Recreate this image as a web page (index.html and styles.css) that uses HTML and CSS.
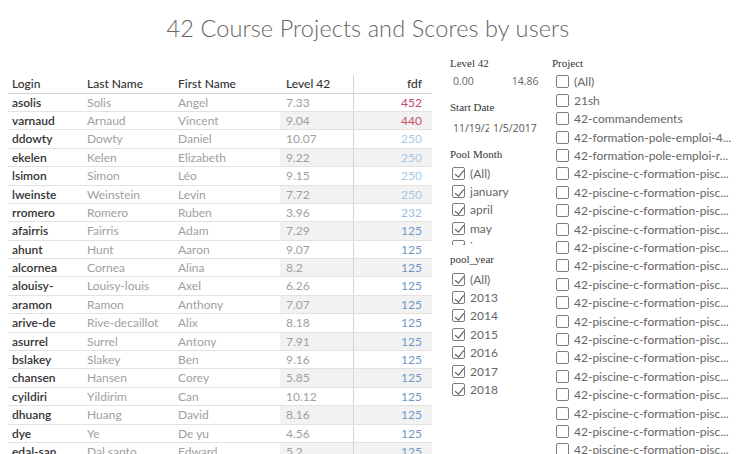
FILE: index.html
```html
<!DOCTYPE html>
<html lang="en">
<head>
<meta charset="utf-8">
<title>42 Course Projects and Scores by users</title>
<link rel="stylesheet" href="styles.css">
</head>
<body>
<header class="title">42 Course Projects and Scores by users</header>
<main class="dash">
  <section class="table">
    <div class="row head"><div>Login</div><div>Last Name</div><div>First Name</div><div class="lvl">Level 42</div><div class="fdf">fdf</div></div>
    <div class="row"><div class="login">asolis</div><div>Solis</div><div>Angel</div><div class="lvl">7.33</div><div class="fdf red">452</div></div>
    <div class="row"><div class="login">varnaud</div><div>Arnaud</div><div>Vincent</div><div class="lvl">9.04</div><div class="fdf red2">440</div></div>
    <div class="row"><div class="login">ddowty</div><div>Dowty</div><div>Daniel</div><div class="lvl">10.07</div><div class="fdf lb">250</div></div>
    <div class="row"><div class="login">ekelen</div><div>Kelen</div><div>Elizabeth</div><div class="lvl">9.22</div><div class="fdf lb">250</div></div>
    <div class="row"><div class="login">lsimon</div><div>Simon</div><div>Léo</div><div class="lvl">9.15</div><div class="fdf lb">250</div></div>
    <div class="row"><div class="login">lweinste</div><div>Weinstein</div><div>Levin</div><div class="lvl">7.72</div><div class="fdf lb">250</div></div>
    <div class="row"><div class="login">rromero</div><div>Romero</div><div>Ruben</div><div class="lvl">3.96</div><div class="fdf mb">232</div></div>
    <div class="row"><div class="login">afairris</div><div>Fairris</div><div>Adam</div><div class="lvl">7.29</div><div class="fdf b">125</div></div>
    <div class="row"><div class="login">ahunt</div><div>Hunt</div><div>Aaron</div><div class="lvl">9.07</div><div class="fdf b">125</div></div>
    <div class="row"><div class="login">alcornea</div><div>Cornea</div><div>Alina</div><div class="lvl">8.2</div><div class="fdf b">125</div></div>
    <div class="row"><div class="login">alouisy-</div><div>Louisy-louis</div><div>Axel</div><div class="lvl">6.26</div><div class="fdf b">125</div></div>
    <div class="row"><div class="login">aramon</div><div>Ramon</div><div>Anthony</div><div class="lvl">7.07</div><div class="fdf b">125</div></div>
    <div class="row"><div class="login">arive-de</div><div>Rive-decaillot</div><div>Alix</div><div class="lvl">8.18</div><div class="fdf b">125</div></div>
    <div class="row"><div class="login">asurrel</div><div>Surrel</div><div>Antony</div><div class="lvl">7.91</div><div class="fdf b">125</div></div>
    <div class="row"><div class="login">bslakey</div><div>Slakey</div><div>Ben</div><div class="lvl">9.16</div><div class="fdf b">125</div></div>
    <div class="row"><div class="login">chansen</div><div>Hansen</div><div>Corey</div><div class="lvl">5.85</div><div class="fdf b">125</div></div>
    <div class="row"><div class="login">cyildiri</div><div>Yildirim</div><div>Can</div><div class="lvl">10.12</div><div class="fdf b">125</div></div>
    <div class="row"><div class="login">dhuang</div><div>Huang</div><div>David</div><div class="lvl">8.16</div><div class="fdf b">125</div></div>
    <div class="row"><div class="login">dye</div><div>Ye</div><div>De yu</div><div class="lvl">4.56</div><div class="fdf b">125</div></div>
    <div class="row"><div class="login">edal-san</div><div>Dal santo</div><div>Edward</div><div class="lvl">5.2</div><div class="fdf b">125</div></div>
  </section>

  <aside class="filters col1">
    <div class="ftitle">Level 42</div>
    <div class="range"><span>0.00</span><span class="hi">14.86</span></div>
    <div class="ftitle gap">Start Date</div>
    <div class="dates"><span class="d1">11/19/2013</span><span class="d2">1/5/2017</span></div>
    <div class="ftitle gap">Pool Month</div>
    <ul class="list months">
      <li><span class="cb on"></span>(All)</li>
      <li><span class="cb on"></span>january</li>
      <li><span class="cb on"></span>april</li>
      <li><span class="cb on"></span>may</li>
      <li><span class="cb on"></span>june</li>
    </ul>
    <div class="ftitle gap2">pool_year</div>
    <ul class="list years">
      <li><span class="cb on"></span>(All)</li>
      <li><span class="cb on"></span>2013</li>
      <li><span class="cb on"></span>2014</li>
      <li><span class="cb on"></span>2015</li>
      <li><span class="cb on"></span>2016</li>
      <li><span class="cb on"></span>2017</li>
      <li><span class="cb on"></span>2018</li>
    </ul>
  </aside>

  <aside class="filters col2">
    <div class="ftitle">Project</div>
    <ul class="list projects">
      <li><span class="cb"></span>(All)</li>
      <li><span class="cb"></span>21sh</li>
      <li><span class="cb"></span>42-commandements</li>
      <li><span class="cb"></span>42-formation-pole-emploi-4...</li>
      <li><span class="cb"></span>42-formation-pole-emploi-r...</li>
      <li><span class="cb"></span>42-piscine-c-formation-pisc...</li>
      <li><span class="cb"></span>42-piscine-c-formation-pisc...</li>
      <li><span class="cb"></span>42-piscine-c-formation-pisc...</li>
      <li><span class="cb"></span>42-piscine-c-formation-pisc...</li>
      <li><span class="cb"></span>42-piscine-c-formation-pisc...</li>
      <li><span class="cb"></span>42-piscine-c-formation-pisc...</li>
      <li><span class="cb"></span>42-piscine-c-formation-pisc...</li>
      <li><span class="cb"></span>42-piscine-c-formation-pisc...</li>
      <li><span class="cb"></span>42-piscine-c-formation-pisc...</li>
      <li><span class="cb"></span>42-piscine-c-formation-pisc...</li>
      <li><span class="cb"></span>42-piscine-c-formation-pisc...</li>
      <li><span class="cb"></span>42-piscine-c-formation-pisc...</li>
      <li><span class="cb"></span>42-piscine-c-formation-pisc...</li>
      <li><span class="cb"></span>42-piscine-c-formation-pisc...</li>
      <li><span class="cb"></span>42-piscine-c-formation-pisc...</li>
      <li><span class="cb"></span>42-piscine-c-formation-pisc...</li>
    </ul>
  </aside>
</main>
</body>
</html>
```

FILE: styles.css
```css
* { box-sizing: border-box; }
html, body { margin: 0; padding: 0; }
body {
  width: 736px;
  height: 454px;
  overflow: hidden;
  background: #fff;
  font-family: Lato, "Open Sans", sans-serif;
  font-size: 12px;
  color: #333;
}
.title {
  height: 55px;
  line-height: 56px;
  text-align: center;
  font-size: 23.5px;
  font-weight: 300;
  color: #666;
  letter-spacing: 0.1px;
}
.dash {
  display: flex;
  align-items: flex-start;
}
.table {
  margin-top: 20.2px;
  margin-left: 8px;
  width: 424px;
}
.row {
  display: grid;
  grid-template-columns: 75px 91px 106px 73px 79px;
  height: 18.4px;
  border-bottom: 1px solid #e2e2e2;
  color: #a0a0a0;
}
.row > div {
  padding-left: 4px;
  line-height: 18px;
  white-space: nowrap;
  overflow: hidden;
}
.row > .lvl { padding-left: 6px; }
.row > .fdf {
  text-align: right;
  padding-left: 0;
  padding-right: 10px;
  border-left: 1px solid #d4d4d4;
}
.row:nth-child(odd):not(.head) > .lvl,
.row:nth-child(odd):not(.head) > .fdf { background: #f2f2f2; }
.head { color: #333; font-weight: 500; border-bottom-color: #d6d6d6; }
.login { color: #333; font-weight: 600; }
.red { color: #c5476b; }
.red2 { color: #c94e70; }
.lb { color: #a9c7e4; }
.mb { color: #9dbde0; }
.b { color: #6e97c8; }

.filters { display: flex; flex-direction: column; }
.col1 { margin-left: 16px; width: 98px; padding-left: 2px; overflow: hidden; }
.col2 { margin-left: 2px; width: 188px; padding-left: 4px; }
.ftitle {
  font-family: "Liberation Serif", serif;
  font-size: 11px;
  color: #333;
  height: 16px;
  line-height: 17px;
}
.ftitle.gap { margin-top: 8px; }
.ftitle.gap2 { margin-top: 6px; }
.range {
  height: 20px;
  line-height: 21px;
  font-family: "Open Sans", sans-serif;
  font-size: 10.5px;
  color: #666;
  display: flex;
  padding-left: 3px;
}
.range .hi { margin-left: 38px; }
.dates {
  margin-top: 3px;
  height: 20px;
  line-height: 21px;
  font-family: "Open Sans", sans-serif;
  font-size: 10.5px;
  color: #555;
  display: flex;
  padding-left: 3px;
}
.dates span { overflow: hidden; white-space: nowrap; flex: none; }
.d1 { width: 36px; }
.d2 { margin-left: 4px; width: 60px; }
.list { list-style: none; margin: 0; padding: 0; }
.list li {
  height: 18.4px;
  display: flex;
  align-items: center;
  gap: 5px;
  color: #666;
  white-space: nowrap;
  padding-left: 2px;
}
.months { margin-top: 2px; height: 81px; overflow: hidden; }
.years { margin-top: 3px; }
.projects { margin-top: 1.8px; }
.col2 .list li { padding-left: 4px; }
.cb {
  flex: none;
  width: 13px;
  height: 13px;
  border: 1px solid #7d7d7d;
  border-radius: 2px;
  position: relative;
}
.cb.on::after {
  content: "";
  position: absolute;
  left: 3.5px;
  top: 0.5px;
  width: 3.5px;
  height: 8px;
  border-right: 1px solid #555;
  border-bottom: 1px solid #555;
  transform: rotate(38deg);
}
```
